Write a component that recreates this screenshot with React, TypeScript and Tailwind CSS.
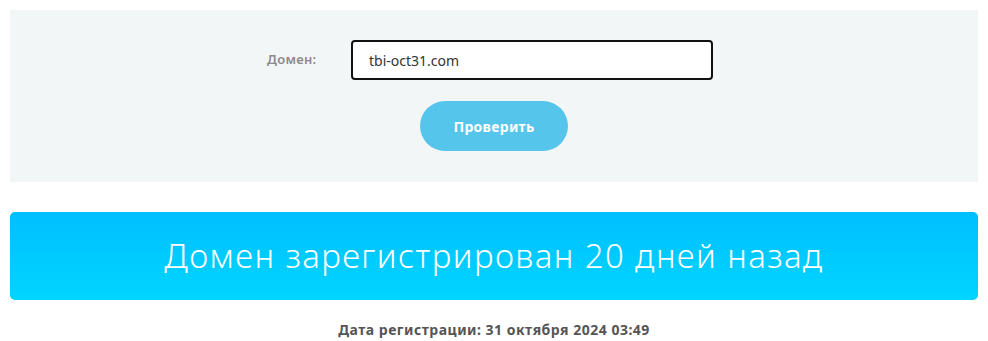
export default function App() {
  return (
    <div className="w-[988px] h-[341px] bg-white pt-[10px] px-[10px] font-['Noto_Sans',sans-serif]">
      {/* Form panel */}
      <div className="bg-[#f3f6f7] pt-[30px] pb-[31px] flex flex-col items-center">
        <div className="flex items-center pr-[8px]">
          <label className="w-[50px] text-[13px] font-semibold text-[#8a8a8a] tracking-[0.3px]">Домен:</label>
          <div className="ml-[34px] w-[362px] h-[40px] border-2 border-[#111] rounded-[4px] bg-white flex items-center pl-[16px] text-[14px] text-[#333]">
            tbi-oct31.com
          </div>
        </div>
        <button className="mt-[21px] w-[148px] h-[50px] rounded-full bg-[#56c5ec] text-white text-[14px] font-bold tracking-[0.3px]">
          Проверить
        </button>
      </div>

      {/* Result banner */}
      <div className="mt-[30px] h-[88px] rounded-[5px] bg-gradient-to-b from-[#00bfff] to-[#00d5ff] flex items-center justify-center">
        <span className="text-white text-[33px] font-light tracking-[1.4px]">Домен зарегистрирован 20 дней назад</span>
      </div>

      <p className="mt-[20px] text-center text-[14px] font-bold text-[#555] leading-[20px] tracking-[0.5px]">
        Дата регистрации: 31 октября 2024 03:49
      </p>
    </div>
  );
}
